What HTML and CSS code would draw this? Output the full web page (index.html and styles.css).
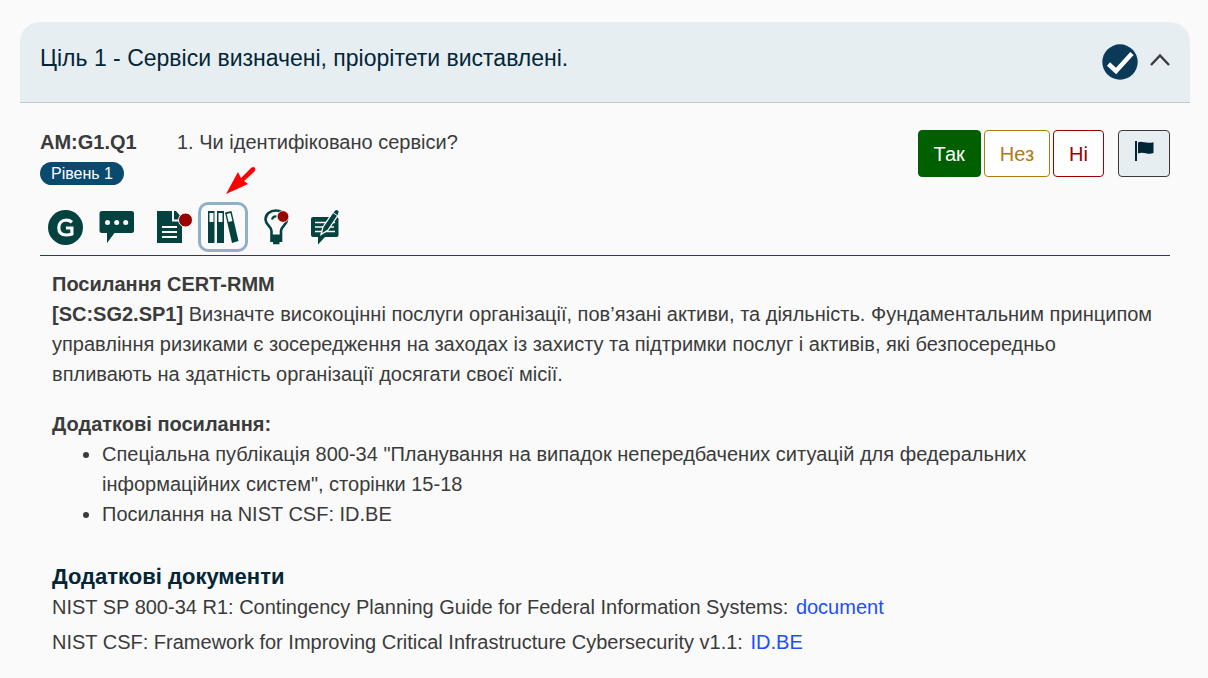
FILE: index.html
```html
<!DOCTYPE html>
<html lang="uk">
<head>
<meta charset="utf-8">
<meta name="viewport" content="width=device-width, initial-scale=1">
<title>Ціль 1</title>
<link rel="stylesheet" href="styles.css">
</head>
<body>
<main class="panel">
  <header class="panel-header">
    <h1 class="panel-title">Ціль 1 - Сервіси визначені, пріорітети виставлені.</h1>
    <svg class="status" viewBox="0 0 36 36" role="img" aria-label="Виконано"><circle cx="18" cy="18" r="17.7" fill="#0a3a57"/><path d="M6.500 20L14 27L30 9.500" fill="none" stroke="#fff" stroke-width="4.500"/></svg>
    <button class="toggle" type="button" aria-label="Згорнути"><svg viewBox="0 0 20 14"><path d="M1 12L10 2.500L19 12" fill="none" stroke="#3b3b3b" stroke-width="2.400"/></svg></button>
  </header>
  <section class="question">
    <div class="question-row">
      <div class="question-id">
        <strong class="code">AM:G1.Q1</strong>
        <span class="level">Рівень 1</span>
      </div>
      <p class="question-text">1. Чи ідентифіковано сервіси?</p>
      <div class="answers">
        <button class="answer yes" type="button">Так</button>
        <button class="answer incomplete" type="button">Нез</button>
        <button class="answer no" type="button">Ні</button>
        <button class="answer flag" type="button" aria-label="Позначити"><svg viewBox="0 0 20 20"><path d="M1 0H3V20H1Z M4 1.500C8-.5 11 3 19.500 1.200V12C14 14.500 10 10 4 12.500Z" fill="#032637"/></svg></button>
      </div>
    </div>
    <div class="tools">
      <button class="tool" type="button" aria-label="Рекомендації"><svg viewBox="0 0 50 50"><circle cx="23.500" cy="25.500" r="17.500"/><path d="M30 20.200C28.500 18.900 26.500 18.200 24.300 18.200C19.500 18.200 16.800 21.300 16.800 25.700C16.800 30.300 19.500 33 24.200 33C26.400 33 28.500 32.600 29.900 32V26H24" fill="none" stroke="#fafafa" stroke-width="3.200"/></svg></button>
      <button class="tool" type="button" aria-label="Коментар"><svg viewBox="0 0 50 50"><path d="M8 9H37.500Q40 9 40 11.500V28.500Q40 31 37.500 31H20.500L13 41V31H8Q5.500 31 5.500 28.500V11.500Q5.500 9 8 9Z"/><g fill="#fafafa"><circle cx="13.500" cy="20.500" r="2.500"/><circle cx="22.700" cy="20.500" r="2.500"/><circle cx="31.700" cy="20.500" r="2.500"/></g></svg></button>
      <button class="tool" type="button" aria-label="Документи"><svg viewBox="0 0 50 50"><path d="M11 9H30L36 16V41H11Z"/><path d="M27 9V18.500H36M16 25H31M16 30H31M16 35H31" fill="none" stroke="#fafafa" stroke-width="2"/><circle cx="39.500" cy="18" r="7" fill="#900" stroke="#fafafa" stroke-width="1"/></svg></button>
      <button class="tool active" type="button" aria-label="Посилання" aria-pressed="true"><svg viewBox="0 0 50 50"><path d="M10 9H16.500V41H10ZM19 9H26V41H19ZM27 10.500L33.500 9L40.500 39L34 41Z"/><path d="M11.500 11H15.500V20H11.500ZM20.500 11H24.500V20H20.500ZM28.700 12L32.500 11L34.400 19L30.600 20Z" fill="#fafafa"/></svg></button>
      <button class="tool" type="button" aria-label="Поради"><svg viewBox="0 0 50 50"><path d="M21.500 33V29C21.500 24 15.500 23 15.500 17.500C15.500 12 20 8.500 26 8.500C32 8.500 37 12 37 17.500C37 23 31 24 31 29V33" fill="none" stroke="#04423f" stroke-width="2.600"/><path d="M20.200 32.500H32.300V40H29.500V42.300H23V40H20.200Z"/><path d="M22 17.500Q23 14 26.500 14.500" fill="none" stroke="#04423f" stroke-width="2.200"/><circle cx="33" cy="14.500" r="5.800" fill="#900" stroke="#fafafa" stroke-width=".8"/></svg></button>
      <button class="tool" type="button" aria-label="Нотатки"><svg viewBox="0 0 50 50"><path d="M11 15H34.500Q36.500 15 36.500 17V33Q36.500 35 34.500 35H23L16 42.500V35H11Q9 35 9 33V17Q9 15 11 15Z"/><path d="M13 20.500H33M13 25H32M13 29.500H33" stroke="#fafafa" stroke-width="1.500"/><path d="M19 32.500L21 25L31.500 9.500L34 7L37.500 9L36.500 12.500L26 28Z" stroke="#fafafa" stroke-width="1.300"/><path d="M30.800 10.500L35.700 13.800" stroke="#fafafa" stroke-width="1"/></svg></button>
      <svg class="pointer" viewBox="0 0 32 30"><path d="M1 29L13 7L16 13L26 3Q29 1 30 3Q31 5 29 7L19 16L23 19Z" fill="#f00"/></svg>
    </div>
    <article class="content">
      <h2 class="subhead">Посилання CERT-RMM</h2>
      <p class="paragraph"><strong>[SC:SG2.SP1]</strong> Визначте високоцінні послуги організації, пов’язані активи, та діяльність. Фундаментальним принципом управління ризиками є зосередження на заходах із захисту та підтримки послуг і активів, які безпосередньо впливають на здатність організації досягати своєї місії.</p>
      <h2 class="subhead">Додаткові посилання:</h2>
      <ul class="references">
        <li>Спеціальна публікація 800-34 "Планування на випадок непередбачених ситуацій для федеральних інформаційних систем", сторінки 15-18</li>
        <li>Посилання на NIST CSF: ID.BE</li>
      </ul>
      <h2 class="documents-title">Додаткові документи</h2>
      <p class="document">NIST SP 800-34 R1: Contingency Planning Guide for Federal Information Systems: <a href="#document">document</a></p>
      <p class="document">NIST CSF: Framework for Improving Critical Infrastructure Cybersecurity v1.1: <a href="#idbe">ID.BE</a></p>
    </article>
  </section>
</main>
</body>
</html>
```
FILE: styles.css
```css
* { box-sizing: border-box; }
body {
  margin: 0;
  padding: 22px 18px 16px 20px;
  background: #fafafa;
  color: #3b3b3b;
  font-family: "Liberation Sans", Arial, sans-serif;
  font-size: 20px;
  line-height: 30px;
}
h1, h2, p, ul { margin: 0; }
button { font: inherit; cursor: pointer; }
svg { display: block; }
.panel-header {
  display: flex;
  align-items: flex-start;
  padding: 21px 20px 22px;
  min-height: 81px;
  background: #e7eef2;
  border-bottom: 1px solid #c4c8ca;
  border-radius: 20px 20px 0 0;
}
.panel-title {
  flex: 1;
  color: #032637;
  font-size: 23px;
  font-weight: 400;
}
.status { width: 36px; height: 36px; margin: 1px 12px 0 0; }
.toggle { padding: 10px 0; border: 0; background: none; }
.toggle svg { width: 20px; height: 14px; }
.question { padding: 24px 20px 0; }
.question-row { display: flex; align-items: flex-start; }
.question-id { width: 137px; }
.code { display: block; }
.level {
  display: inline-block;
  padding: 0 11px;
  border-radius: 12px;
  background: #0b4a6f;
  color: #fff;
  font-size: 16px;
  line-height: 23px;
}
.question-text { flex: 1; }
.answers { display: flex; gap: 3px; padding-top: 3px; }
.answer {
  height: 47px;
  padding: 0 15px;
  border: 1px solid;
  border-radius: 4px;
  background: #fff;
}
.yes { background: #006000; border-color: #006000; color: #fff; }
.incomplete { color: #b17a12; border-color: #b17a12; }
.no { color: #900; border-color: #900; }
.flag {
  margin-left: 11px;
  background: #e7eef2;
  border-color: #3b3b3b;
  padding: 0 15px 5px;
}
.flag svg { width: 20px; height: 20px; }
.tools {
  position: relative;
  display: flex;
  gap: 2px;
  margin-top: 15px;
  padding: 0 2px 3px;
  border-bottom: 1px solid #0b4a6f;
}
.tool {
  width: 50px;
  height: 50px;
  padding: 0;
  border: 0;
  border-radius: 10px;
  background: none;
}
.tool svg { width: 50px; height: 50px; fill: #04423f; }
.active { box-shadow: inset 0 0 0 3px #8fb0c6; }
.pointer {
  position: absolute;
  left: 185px;
  top: -37px;
  width: 32px;
  height: 30px;
}
.content { padding: 13px 12px 0; }
.subhead { font-size: 20px; line-height: 30px; }
.paragraph { margin-bottom: 20px; }
.references { padding-left: 50px; }
.documents-title {
  margin-top: 32px;
  color: #032637;
  font-size: 22px;
  line-height: 31px;
}
.document { margin-bottom: 5px; }
.document a { margin-left: 2px; color: #1a4fff; text-decoration: none; }
```
